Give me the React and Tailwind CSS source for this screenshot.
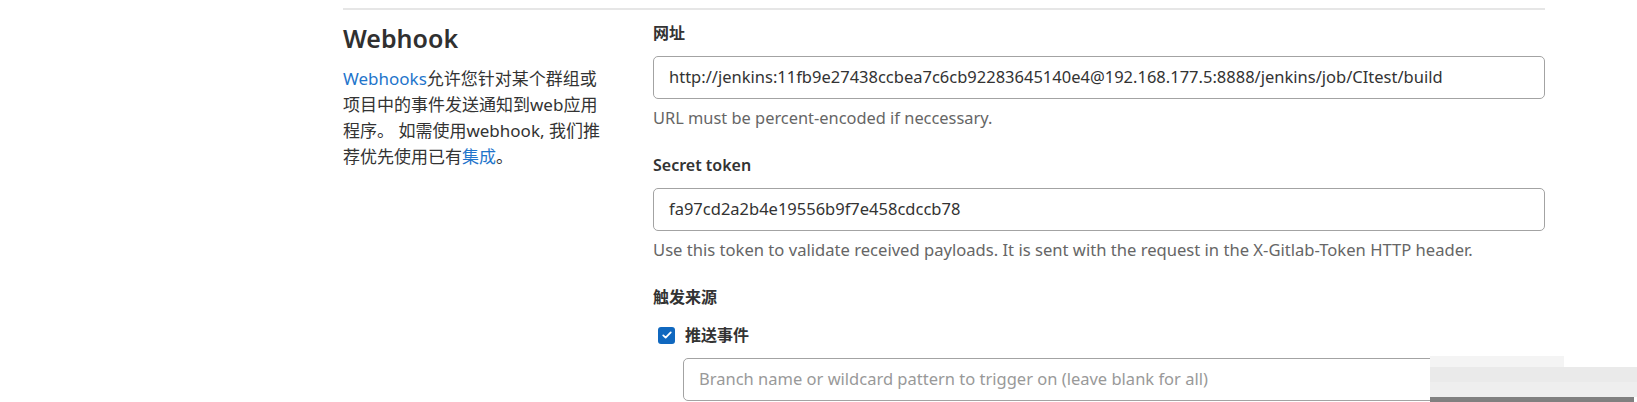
export default function App() {
  const font = { fontFamily: '"Noto Sans", "Noto Sans CJK SC", sans-serif' };
  return (
    <div className="w-[1637px] h-[402px] bg-white overflow-hidden relative" style={font}>
      <div className="ml-[343px] mt-[8px] w-[1202px] border-t-2 border-[#e6e6e6] flex">
        {/* left description */}
        <div className="w-[310px] shrink-0 pt-[12px]">
          <h4 className="text-[25px] font-semibold text-[#303030] leading-[32px]">Webhook</h4>
          <p className="mt-[12px] w-[262px] text-[17px] leading-[26px] text-[#333]">
            <a className="text-[#1f75cb]">Webhooks</a>允许您针对某个群组或项目中的事件发送通知到web应用程序。 如需使用webhook, 我们推荐优先使用已有<a className="text-[#1f75cb]">集成</a>。
          </p>
        </div>

        {/* form */}
        <div className="flex-1 pt-[10px] text-[#333]">
          <label className="block text-[16px] font-bold leading-[26px]">网址</label>
          <div className="mt-[10px] h-[43px] border border-[#a3a3a3] rounded-[5px] flex items-center px-[15px] text-[16.5px]">
            http://jenkins:11fb9e27438ccbea7c6cb92283645140e4@192.168.177.5:8888/jenkins/job/CItest/build
          </div>
          <p className="mt-[6px] text-[16.4px] leading-[26px] text-[#666]">URL must be percent-encoded if neccessary.</p>

          <label className="block mt-[21px] text-[16px] font-semibold leading-[26px]">Secret token</label>
          <div className="mt-[10px] h-[43px] border border-[#a3a3a3] rounded-[5px] flex items-center px-[15px] text-[16.5px]">
            fa97cd2a2b4e19556b9f7e458cdccb78
          </div>
          <p className="mt-[6px] text-[16.6px] leading-[26px] text-[#666]">
            Use this token to validate received payloads. It is sent with the request in the X-Gitlab-Token HTTP header.
          </p>

          <label className="block mt-[21px] text-[16px] font-bold leading-[26px]">触发来源</label>
          <div className="mt-[12px] ml-[5px] flex items-center gap-[10px]">
            <span className="w-[17px] h-[17px] rounded-[3px] bg-[#1068bf] flex items-center justify-center">
              <svg viewBox="0 0 16 16" className="w-[12px] h-[12px]" fill="none" stroke="white" strokeWidth="2.4" strokeLinecap="round" strokeLinejoin="round">
                <path d="M3 8.5l3.2 3L13 4.5" />
              </svg>
            </span>
            <span className="text-[16px] font-bold leading-[26px]">推送事件</span>
          </div>
          <div className="mt-[10px] ml-[30px] h-[43px] border border-[#a3a3a3] rounded-[5px] flex items-center px-[15px] text-[16.5px] text-[#999]">
            Branch name or wildcard pattern to trigger on (leave blank for all)
          </div>
        </div>
      </div>

      {/* pixelated watermark in the corner */}
      <div className="absolute left-[1430px] top-[356px] w-[207px] h-[46px] flex flex-col">
        <div className="h-[11px] w-[134px] bg-[#f4f4f4]" />
        <div className="h-[15px] bg-[#eaeaea]" />
        <div className="h-[15px] bg-[#eeeeee]" />
        <div className="h-[5px] w-[204px] bg-[#808080]" />
      </div>
    </div>
  );
}
